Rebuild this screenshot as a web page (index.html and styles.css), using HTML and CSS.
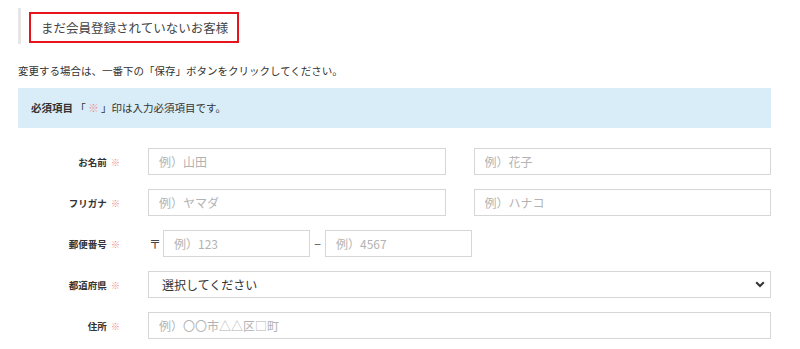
FILE: index.html
```html
<!DOCTYPE html>
<html lang="ja">
<head>
<meta charset="utf-8">
<link rel="stylesheet" href="styles.css">
</head>
<body>
<div class="page">
  <h2 class="heading"><span class="heading-box">まだ会員登録されていないお客様</span></h2>
  <p class="lead">変更する場合は、一番下の「保存」ボタンをクリックしてください。</p>
  <div class="notice"><b>必須項目</b> 「 <span class="req">※</span> 」印は入力必須項目です。</div>
  <form class="form">
    <div class="row">
      <label class="label">お名前 <span class="req">※</span></label>
      <div class="fields two">
        <input class="input" placeholder="例）山田">
        <input class="input" placeholder="例）花子">
      </div>
    </div>
    <div class="row">
      <label class="label">フリガナ <span class="req">※</span></label>
      <div class="fields two">
        <input class="input" placeholder="例）ヤマダ">
        <input class="input" placeholder="例）ハナコ">
      </div>
    </div>
    <div class="row">
      <label class="label">郵便番号 <span class="req">※</span></label>
      <div class="fields zip">
        <span class="mark">〒</span>
        <input class="input zip-a" placeholder="例）123">
        <span class="dash">−</span>
        <input class="input zip-b" placeholder="例）4567">
      </div>
    </div>
    <div class="row">
      <label class="label">都道府県 <span class="req">※</span></label>
      <div class="fields">
        <div class="select">
          <span>選択してください</span>
          <svg class="chev" width="10" height="7" viewBox="0 0 10 7"><path d="M1.2 1.2 L5 5 L8.8 1.2" fill="none" stroke="#333" stroke-width="2"/></svg>
        </div>
      </div>
    </div>
    <div class="row">
      <label class="label">住所 <span class="req">※</span></label>
      <div class="fields">
        <input class="input" placeholder="例）〇〇市△△区□町">
      </div>
    </div>
  </form>
</div>
</body>
</html>
```
FILE: styles.css
```css
* { box-sizing: border-box; }
html, body { margin: 0; padding: 0; background: #fff; }
body {
  font-family: "Noto Sans CJK JP", "Noto Sans", sans-serif;
  color: #333;
}
.page {
  width: 753px;
  margin-left: 18px;
  padding-top: 8px;
}
.heading {
  margin: 0;
  display: flex;
  align-items: flex-start;
  border-left: 3px solid #e6e6e6;
  padding: 4px 0 1px 8px;
  font-weight: normal;
  font-size: 12.5px;
  height: 36px;
}
.heading-box {
  display: block;
  border: 2px solid #e8141c;
  height: 31px;
  width: 210px;
  padding-left: 10px;
  font-size: 12.5px;
  line-height: 27px;
  color: #444;
  white-space: nowrap;
}
.lead {
  margin: 19px 0 0 0;
  font-size: 10.5px;
  line-height: 15px;
  color: #333;
}
.notice {
  margin-top: 10px;
  background: #d9edf8;
  height: 40px;
  padding-left: 13px;
  font-size: 10.5px;
  line-height: 40px;
  color: #333;
}
.notice b { font-weight: bold; }
.req { color: #f08a8a; font-weight: normal; }
.form { margin-top: 20px; }
.row {
  display: flex;
  align-items: center;
  height: 27px;
  margin-bottom: 14px;
}
.label {
  width: 102px;
  text-align: right;
  font-size: 9.5px;
  font-weight: bold;
  color: #333;
  flex: none;
  margin-right: 28px;
}
.label .req { font-size: 9px; margin-left: 2px; }
.fields {
  flex: 1;
  display: flex;
  align-items: center;
  height: 27px;
}
.fields.two { gap: 28px; }
.input {
  flex: 1;
  min-width: 0;
  height: 27px;
  border: 1px solid #d6d6d6;
  border-radius: 0;
  padding: 0 10px;
  font-family: "Noto Sans CJK JP", "Noto Sans", sans-serif;
  font-size: 12px;
  color: #333;
  background: #fff;
  outline: none;
}
.input::placeholder { color: #b3b3b3; }
.mark {
  font-size: 12px;
  width: 14px;
  margin-left: 1px;
  color: #444;
}
.zip .input { flex: none; width: 147px; }
.dash {
  width: 15px;
  text-align: center;
  font-size: 12px;
  color: #555;
}
.select {
  flex: 1;
  height: 27px;
  border: 1px solid #d6d6d6;
  display: flex;
  align-items: center;
  justify-content: space-between;
  padding: 0 4px 0 13px;
  font-size: 12px;
  color: #333;
}
.chev { margin-right: 1px; }
```
